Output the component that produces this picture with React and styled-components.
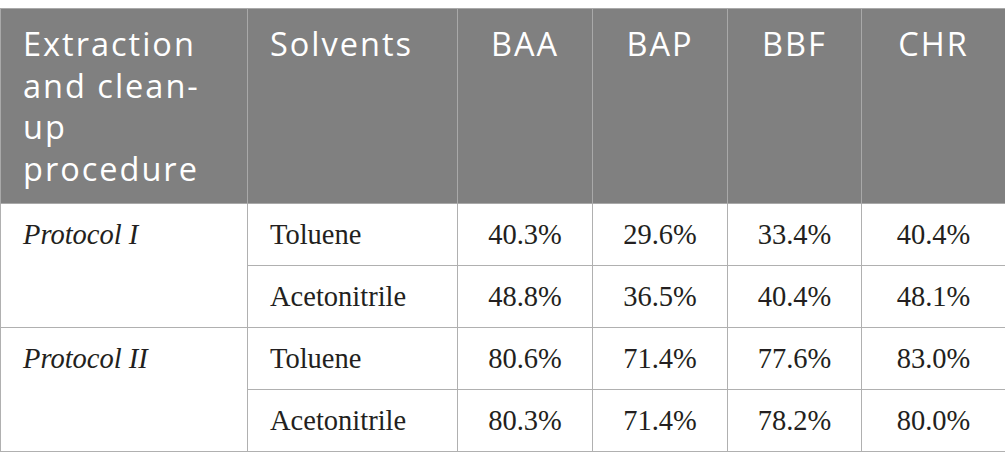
import React from 'react'
import styled, { createGlobalStyle } from 'styled-components'

const GlobalStyle = createGlobalStyle`
  html, body {
    margin: 0;
    padding: 0;
    background: #ffffff;
  }
`

const Page = styled.div`
  padding-top: 8px;
`

const Table = styled.table`
  width: 1005px;
  table-layout: fixed;
  border-collapse: collapse;
`

const HeadCell = styled.th`
  background: #808080;
  color: #ffffff;
  font-family: 'Open Sans', 'Noto Sans', sans-serif;
  font-weight: 400;
  font-size: 32.5px;
  line-height: 41.5px;
  letter-spacing: 2px;
  text-align: ${p => (p.center ? 'center' : 'left')};
  vertical-align: top;
  padding: 14px 22px;
  border: 1px solid #a9a9a9;
  height: 166px;
`

const Cell = styled.td`
  font-family: 'Liberation Serif', 'Times New Roman', serif;
  font-size: 28.5px;
  font-style: ${p => (p.italic ? 'italic' : 'normal')};
  line-height: 33px;
  color: #231f20;
  text-align: ${p => (p.center ? 'center' : 'left')};
  vertical-align: top;
  padding: 14px 22px;
  border: 1px solid #b0b0b0;
`

const widths = [247, 210, 135, 135, 134, 144]
const compounds = ['BAA', 'BAP', 'BBF', 'CHR']

const protocols = [
  {
    name: 'Protocol I',
    rows: [
      { solvent: 'Toluene', values: ['40.3%', '29.6%', '33.4%', '40.4%'] },
      { solvent: 'Acetonitrile', values: ['48.8%', '36.5%', '40.4%', '48.1%'] },
    ],
  },
  {
    name: 'Protocol II',
    rows: [
      { solvent: 'Toluene', values: ['80.6%', '71.4%', '77.6%', '83.0%'] },
      { solvent: 'Acetonitrile', values: ['80.3%', '71.4%', '78.2%', '80.0%'] },
    ],
  },
]

export default function App() {
  return (
    <Page>
      <GlobalStyle />
      <Table>
        <colgroup>
          {widths.map((w, i) => (
            <col key={i} style={{ width: w }} />
          ))}
        </colgroup>
        <thead>
          <tr>
            <HeadCell>Extraction and clean-up procedure</HeadCell>
            <HeadCell>Solvents</HeadCell>
            {compounds.map(c => (
              <HeadCell center key={c}>{c}</HeadCell>
            ))}
          </tr>
        </thead>
        <tbody>
          {protocols.map(p =>
            p.rows.map((r, i) => (
              <tr key={p.name + i}>
                {i === 0 && (
                  <Cell italic rowSpan={p.rows.length}>{p.name}</Cell>
                )}
                <Cell>{r.solvent}</Cell>
                {r.values.map((v, j) => (
                  <Cell center key={j}>{v}</Cell>
                ))}
              </tr>
            ))
          )}
        </tbody>
      </Table>
    </Page>
  )
}
